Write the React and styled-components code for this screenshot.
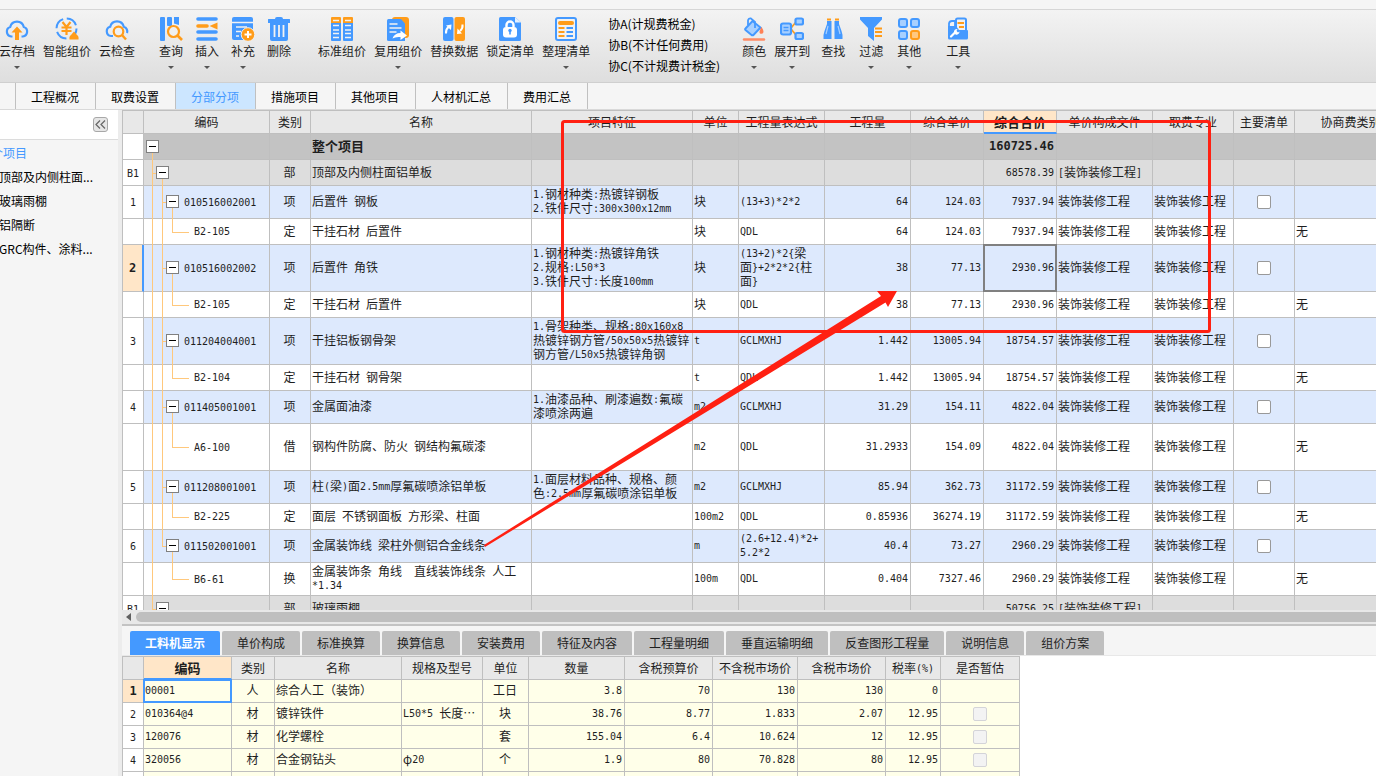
import React from 'react';
import styled, { createGlobalStyle, css } from 'styled-components';

const BLUE = '#4499ff';
const ORANGE = '#ff9c1a';
const PALE = '#a8d0ff';

const ICONS = {
  cloudUp: (
    <>
      <path
        d="M7.5 19.5H6.2A4.9 4.9 0 0 1 5.2 10 7 7 0 0 1 18.8 10a4.9 4.9 0 0 1-1 9.5h-1.3"
        fill="none"
        stroke={BLUE}
        strokeWidth="2.2"
      />
      <path d="M12 9.5l5.5 6H14V23h-4v-7.500H6.500z" fill={ORANGE} />
    </>
  ),
  smart: (
    <>
      <circle cx="11.500" cy="11.500" r="10" fill="none" stroke={BLUE} strokeWidth="2" strokeDasharray="12 3.700" />
      <path d="M7.500 5l4 5 4-5M6.500 10.500h10M6.500 14h10M11.500 10v8" fill="none" stroke={ORANGE} strokeWidth="2.200" />
      <path d="M19 14.500l3 3.500q2 1 1.500 4.500h-9q-.5-3.500 1.500-4.500z" fill={ORANGE} />
    </>
  ),
  cloudSearch: (
    <>
      <path
        d="M8 19H6A4.700 4.700 0 0 1 5.200 9.800 7 7 0 0 1 18.800 9.800 4.700 4.700 0 0 1 22 16"
        fill="none"
        stroke={BLUE}
        strokeWidth="2.200"
      />
      <circle cx="13.500" cy="14.500" r="4.800" fill="#f0f0f0" stroke={ORANGE} strokeWidth="2.200" />
      <path d="M17 18l4 4.500" stroke={ORANGE} strokeWidth="2.400" />
    </>
  ),
  query: (
    <>
      <rect x="1" y="0" width="5" height="24" rx="1" fill={BLUE} />
      <rect x="8" y="0" width="5" height="9" rx="1" fill={BLUE} />
      <path d="M15 0h5v8l-5-1.500z" fill={BLUE} />
      <circle cx="14.500" cy="14.500" r="5.500" fill="#f0f0f0" stroke={ORANGE} strokeWidth="2.200" />
      <path d="M18.500 18.500l4.500 4.500" stroke={ORANGE} strokeWidth="2.600" />
    </>
  ),
  insert: (
    <>
      <path d="M3 2h18M3 15h18M3 22h18" stroke={BLUE} strokeWidth="3.600" strokeLinecap="round" />
      <path d="M3 9h9" stroke={ORANGE} strokeWidth="3.600" strokeLinecap="round" />
      <path d="M14.500 9l8-3.500v7z" fill={ORANGE} />
    </>
  ),
  supplement: (
    <>
      <rect x="1" y="0" width="21" height="23" rx="2" fill={BLUE} />
      <path d="M1 5.500h21M5 10h11M5 14.500h5M5 19h3" stroke="#f2f2f2" strokeWidth="1.600" />
      <circle cx="17" cy="17.500" r="6.800" fill={ORANGE} stroke="#f0f0f0" strokeWidth="1" />
      <path d="M13.500 17.500h7M17 14v7" stroke="#fff" strokeWidth="2" />
    </>
  ),
  trash: (
    <>
      <path d="M8 2q0-2 2-2h4q2 0 2 2h6.500q.5 0 .5.500V6H1V2.500Q1 2 1.500 2z" fill={BLUE} />
      <path d="M3 6h18v16q0 2-2 2H5q-2 0-2-2z" fill={BLUE} />
      <path d="M7.500 8v12M12 8v12M16.500 8v12" stroke="#f2f2f2" strokeWidth="1.800" />
    </>
  ),
  standard: (
    <>
      <path d="M1 1q0-1 1-1h8q1 0 1 1v5H1zM13 1q0-1 1-1h8q1 0 1 1v5H13z" fill={ORANGE} />
      <path d="M1 6h10v17q0 1-1 1H2q-1 0-1-1zM13 6h10v17q0 1-1 1h-8q-1 0-1-1z" fill={BLUE} />
      <path
        d="M3 3.500h6M3 8.500h6M3 13h6M3 16.500h6M3 20.500h6M15 3.500h6M15 8.500h6M15 13h6M15 16.500h6M15 20.500h6"
        stroke="#f2f2f2"
        strokeWidth="1.500"
      />
    </>
  ),
  reuse: (
    <>
      <rect x="6" y="0" width="17" height="21" rx="3" fill={ORANGE} />
      <path d="M2.500 2H15l4 4.500V24H2.500Q1 24 1 22.500v-19Q1 2 2.500 2z" fill={BLUE} />
      <path d="M3.500 7h8M3.500 11h12M3.500 15h7" stroke="#f2f2f2" strokeWidth="1.600" />
      <path d="M6.500 21.500q2-5.500 8-5.500v-2.500l6.500 5-6.500 4.500v-3q-5-.5-8 1.500z" fill="#fff" />
    </>
  ),
  replace: (
    <>
      <rect x="1" y="0" width="10.500" height="24" rx="2" fill={BLUE} />
      <rect x="12.500" y="0" width="10.500" height="24" rx="2" fill={ORANGE} />
      <path d="M4 16.500q-.5-4 2.500-6.500M20.500 7.500q.5 4-2.500 6.500" fill="none" stroke="#fff" strokeWidth="2" />
      <path d="M4 8.500l5.500-1-.5 5.500zM20 16.500l-5 .5.500-5.500z" fill="#fff" />
    </>
  ),
  lock: (
    <>
      <path d="M2.500 0H17l6 5.500v17q0 1.500-1.500 1.500h-19Q1 24 1 22.500v-21Q1 0 2.500 0z" fill={BLUE} />
      <path d="M17 0l6 5.500h-6z" fill="#e6f1ff" />
      <rect x="5" y="10" width="14" height="10.500" rx="3" fill="#fff" />
      <path d="M8.500 10V8a3.500 3.500 0 0 1 7 0v2" fill="none" stroke="#fff" strokeWidth="2.400" />
      <circle cx="12" cy="13.500" r="1.700" fill={BLUE} />
      <path d="M12 14v3.500" stroke={BLUE} strokeWidth="1.600" />
    </>
  ),
  arrange: (
    <>
      <rect x="2" y="1" width="20" height="22" rx="2" fill="#f2f2f2" stroke={BLUE} strokeWidth="2" />
      <path d="M6 6h12" stroke={ORANGE} strokeWidth="4" strokeLinecap="round" />
      <path d="M4.500 11h6M4.500 15h6M4.500 19h6" stroke={ORANGE} strokeWidth="2" />
      <path d="M12.500 11h6.500M12.500 15h6.500M12.500 19h6.500" stroke={BLUE} strokeWidth="2" />
    </>
  ),
  color: (
    <>
      <path d="M3.500 11.500L10.500 4l8 6.500-7 7.500q-1 .5-2 0l-6-5q-.8-.7 0-1.500z" fill={PALE} stroke={BLUE} strokeWidth="2" />
      <path d="M6 8V3.500Q6.500 1 9 1.500l4 3.500v6" fill="none" stroke={BLUE} strokeWidth="1.800" />
      <path d="M19.500 11.500q2.500 4 0 4.500t0-4.500z" fill="#ff8055" stroke="#ff8055" strokeWidth="1.500" />
      <path d="M2 22.500h20" stroke="#ff8c66" strokeWidth="2.400" strokeLinecap="round" />
    </>
  ),
  expand: (
    <>
      <path d="M11 11l5-6M11 12l5 6" stroke={ORANGE} strokeWidth="1.800" />
      <rect x="1" y="6.500" width="10" height="11" rx="2" fill={PALE} stroke={BLUE} strokeWidth="2.200" />
      <path d="M3.500 10.500h5M3.500 13.500h5" stroke={BLUE} strokeWidth="1.500" />
      <rect x="15.500" y="1.500" width="7.500" height="6" rx="1.500" fill={PALE} stroke={BLUE} strokeWidth="2.200" />
      <rect x="15.500" y="16" width="7.500" height="6" rx="1.500" fill={PALE} stroke={BLUE} strokeWidth="2.200" />
    </>
  ),
  find: (
    <>
      <path d="M6 4h4.500v18h-8q-.5-4 1-8L6 7zM13.500 4H18v3l2.500 7q1.500 4 1 8h-8z" fill={BLUE} />
      <path d="M6 2.500h4M14 2.500h4" stroke={ORANGE} strokeWidth="2.200" />
      <path d="M7 9l-2 8M17 9l2 8" stroke={PALE} strokeWidth="1.200" />
    </>
  ),
  filter: (
    <>
      <path d="M1 0h22v2.500L15 11v13l-6-5v-8L1 2.500z" fill={BLUE} />
      <path d="M16 11.500h7M16 15h7M16 19h7" stroke={ORANGE} strokeWidth="1.900" />
    </>
  ),
  other: (
    <>
      <rect x="2" y="2" width="8" height="8" rx="2" fill={PALE} stroke={BLUE} strokeWidth="2" />
      <rect x="14" y="2" width="8" height="8" rx="2" fill={PALE} stroke={BLUE} strokeWidth="2" />
      <rect x="2" y="14" width="8" height="8" rx="2" fill={PALE} stroke={BLUE} strokeWidth="2" />
      <rect x="14" y="14" width="8" height="8" rx="2" fill="#ffc880" stroke={ORANGE} strokeWidth="2" />
    </>
  ),
  tools: (
    <>
      <path d="M10 13V3q0-1.500 1.500-1.500h7Q20 1.500 20 3v10" fill="#f2f2f2" stroke={BLUE} strokeWidth="2" />
      <path d="M11.500 6h6.500M13 10h5" stroke={ORANGE} strokeWidth="2" />
      <path d="M3 10V6.500Q3.500 4 6 4h3v6z" fill="#f2f2f2" stroke={BLUE} strokeWidth="1.800" />
      <path d="M2 9h8l3 4h8q1 0 1 1v7q0 1.500-1.500 1.500h-17Q2 22.500 2 21z" fill={BLUE} />
      <path d="M5 19.500l4.500-4.500" stroke="#fff" strokeWidth="2.200" strokeLinecap="round" />
      <path d="M8 15.500a3 3 0 0 1 3.500-3.500l-1 2 1.500 1.500 1.500-1a3 3 0 0 1-4 3z" fill="#fff" />
    </>
  ),
};

const TOOL_GROUPS = [
  {
    gap: 8,
    start: 0,
    items: [
      { icon: 'cloudUp', label: '云存档', menu: true },
      { icon: 'smart', label: '智能组价' },
      { icon: 'cloudSearch', label: '云检查' },
    ],
  },
  {
    gap: 12,
    start: 24,
    items: [
      { icon: 'query', label: '查询', menu: true },
      { icon: 'insert', label: '插入', menu: true },
      { icon: 'supplement', label: '补充', menu: true },
      { icon: 'trash', label: '删除' },
    ],
  },
  {
    gap: 8,
    start: 27,
    items: [
      { icon: 'standard', label: '标准组价' },
      { icon: 'reuse', label: '复用组价', menu: true },
      { icon: 'replace', label: '替换数据' },
      { icon: 'lock', label: '锁定清单' },
      { icon: 'arrange', label: '整理清单', menu: true },
    ],
  },
  { notes: ['协A(计规费税金)', '协B(不计任何费用)', '协C(不计规费计税金)'] },
  {
    gap: 8,
    start: 20,
    items: [
      { icon: 'color', label: '颜色', menu: true },
      { icon: 'expand', label: '展开到', menu: true },
    ],
  },
  {
    gap: 14,
    start: 11,
    items: [
      { icon: 'find', label: '查找' },
      { icon: 'filter', label: '过滤', menu: true },
      { icon: 'other', label: '其他', menu: true },
    ],
  },
  { gap: 8, start: 25, items: [{ icon: 'tools', label: '工具', menu: true }] },
];

const PAGES = ['工程概况', '取费设置', '分部分项', '措施项目', '其他项目', '人材机汇总', '费用汇总'];

const BILL_COLUMNS = [
  { width: 21, label: '' },
  { width: 126, label: '编码' },
  { width: 41, label: '类别' },
  { width: 221, label: '名称' },
  { width: 161, label: '项目特征' },
  { width: 46, label: '单位' },
  { width: 86, label: '工程量表达式' },
  { width: 86, label: '工程量' },
  { width: 73, label: '综合单价' },
  { width: 73, label: '综合合价', active: true },
  { width: 96, label: '单价构成文件' },
  { width: 81, label: '取费专业' },
  { width: 61, label: '主要清单' },
  { width: 112, label: '协商费类别' },
];

const WORK = '装饰装修工程';

const BILL_ROWS = [
  { level: 0, no: '', code: '', type: '', name: '整个项目', total: '160725.46' },
  { level: 1, no: 'B1', code: '', type: '部', name: '顶部及内侧柱面铝单板', total: '68578.39', file: `[${WORK}]` },
  { level: 2, no: '1', code: '010516002001', type: '项', name: '后置件 钢板', feature: '1.钢材种类:热镀锌钢板\n2.铁件尺寸:300x300x12mm', unit: '块', expr: '(13+3)*2*2', qty: '64', price: '124.03', total: '7937.94' },
  { level: 3, code: 'B2-105', type: '定', name: '干挂石材 后置件', unit: '块', expr: 'QDL', qty: '64', price: '124.03', total: '7937.94' },
  { level: 2, no: '2', active: true, code: '010516002002', type: '项', name: '后置件 角铁', feature: '1.钢材种类:热镀锌角铁\n2.规格:L50*3\n3.铁件尺寸:长度100mm', unit: '块', expr: '(13+2)*2{梁\n面}+2*2*2{柱\n面}', qty: '38', price: '77.13', total: '2930.96' },
  { level: 3, code: 'B2-105', type: '定', name: '干挂石材 后置件', unit: '块', expr: 'QDL', qty: '38', price: '77.13', total: '2930.96' },
  { level: 2, no: '3', code: '011204004001', type: '项', name: '干挂铝板钢骨架', feature: '1.骨架种类、规格:80x160x8\n热镀锌钢方管/50x50x5热镀锌\n钢方管/L50x5热镀锌角钢', unit: 't', expr: 'GCLMXHJ', qty: '1.442', price: '13005.94', total: '18754.57' },
  { level: 3, code: 'B2-104', type: '定', name: '干挂石材 钢骨架', unit: 't', expr: 'QDL', qty: '1.442', price: '13005.94', total: '18754.57' },
  { level: 2, no: '4', code: '011405001001', type: '项', name: '金属面油漆', feature: '1.油漆品种、刷漆遍数:氟碳\n漆喷涂两遍', unit: 'm2', expr: 'GCLMXHJ', qty: '31.29', price: '154.11', total: '4822.04' },
  { level: 3, tall: true, code: 'A6-100', type: '借', name: '钢构件防腐、防火 钢结构氟碳漆', unit: 'm2', expr: 'QDL', qty: '31.2933', price: '154.09', total: '4822.04' },
  { level: 2, no: '5', code: '011208001001', type: '项', name: '柱(梁)面2.5mm厚氟碳喷涂铝单板', feature: '1.面层材料品种、规格、颜\n色:2.5mm厚氟碳喷涂铝单板', unit: 'm2', expr: 'GCLMXHJ', qty: '85.94', price: '362.73', total: '31172.59' },
  { level: 3, code: 'B2-225', type: '定', name: '面层 不锈钢面板 方形梁、柱面', unit: '100m2', expr: 'QDL', qty: '0.85936', price: '36274.19', total: '31172.59' },
  { level: 2, no: '6', last: true, code: '011502001001', type: '项', name: '金属装饰线 梁柱外侧铝合金线条', unit: 'm', expr: '(2.6+12.4)*2+\n5.2*2', qty: '40.4', price: '73.27', total: '2960.29' },
  { level: 3, last: true, code: 'B6-61', type: '换', name: '金属装饰条 角线  直线装饰线条 人工\n*1.34', unit: '100m', expr: 'QDL', qty: '0.404', price: '7327.46', total: '2960.29' },
  { level: 1, no: 'B1', code: '', type: '部', name: '玻璃雨棚', total: '50756.25', file: `[${WORK}]` },
];

const DETAIL_TABS = [
  '工料机显示',
  '单价构成',
  '标准换算',
  '换算信息',
  '安装费用',
  '特征及内容',
  '工程量明细',
  '垂直运输明细',
  '反查图形工程量',
  '说明信息',
  '组价方案',
];

const DETAIL_COLUMNS = [
  { width: 21, label: '' },
  { width: 88, label: '编码', active: true },
  { width: 43, label: '类别' },
  { width: 127, label: '名称' },
  { width: 81, label: '规格及型号' },
  { width: 46, label: '单位' },
  { width: 96, label: '数量' },
  { width: 88, label: '含税预算价' },
  { width: 85, label: '不含税市场价' },
  { width: 88, label: '含税市场价' },
  { width: 55, label: '税率(%)' },
  { width: 79, label: '是否暂估' },
];

const DETAIL_ROWS = [
  ['1', '00001', '人', '综合人工（装饰）', '', '工日', '3.8', '70', '130', '130', '0'],
  ['2', '010364@4', '材', '镀锌铁件', 'L50*5 长度…', '块', '38.76', '8.77', '1.833', '2.07', '12.95'],
  ['3', '120076', '材', '化学螺栓', '', '套', '155.04', '6.4', '10.624', '12', '12.95'],
  ['4', '320056', '材', '合金钢钻头', 'φ20', '个', '1.9', '80', '70.828', '80', '12.95'],
  ['', '', '', '', '', '', '', '', '', '', ''],
];

// Latin characters take half the width of a Chinese one in the grids
const CellText = ({ children = '' }) =>
  children.split(/([\x20-\x7e]+)/).map((part, i) => (i % 2 ? <Half key={i}>{part}</Half> : part));

const Toolbar = () => (
  <StyledToolbar>
    {TOOL_GROUPS.map((group, i) =>
      group.notes ? (
        <Notes key={i}>
          {group.notes.map((note) => (
            <li key={note}>{note}</li>
          ))}
        </Notes>
      ) : (
        <ToolGroup key={i} $gap={group.gap} $start={group.start}>
          {group.items.map(({ icon, label, menu }) => (
            <ToolButton key={label} type="button">
              <svg width="24" height="24" viewBox="0 0 24 24" aria-hidden="true">
                {ICONS[icon]}
              </svg>
              <span>{label}</span>
              {menu && <Caret />}
            </ToolButton>
          ))}
        </ToolGroup>
      )
    )}
  </StyledToolbar>
);

const Sidebar = () => (
  <StyledSidebar>
    <SidebarHead>
      <CollapseButton type="button" aria-label="收起">
        <svg width="11" height="9" viewBox="0 0 11 9" aria-hidden="true">
          <path d="M5 0.500L1 4.500l4 4M10 0.500L6 4.500l4 4" fill="none" stroke="#666" strokeWidth="1.200" />
        </svg>
      </CollapseButton>
    </SidebarHead>
    <Outline>
      <OutlineItem $root>整个项目</OutlineItem>
      <OutlineItem>顶部及内侧柱面...</OutlineItem>
      <OutlineItem>玻璃雨棚</OutlineItem>
      <OutlineItem>铝隔断</OutlineItem>
      <OutlineItem>GRC构件、涂料...</OutlineItem>
    </Outline>
  </StyledSidebar>
);

const GridHead = ({ columns }) => (
  <>
    <colgroup>
      {columns.map((col, i) => (
        <Col key={i} $width={col.width} />
      ))}
    </colgroup>
    <thead>
      <tr>
        {columns.map((col, i) => (
          <HeadCell key={i} $active={col.active}>
            <CellText>{col.label}</CellText>
          </HeadCell>
        ))}
      </tr>
    </thead>
  </>
);

const TreeCell = ({ row }) => {
  const { level, last, code } = row;
  return (
    <StyledTreeCell>
      <Guide $depth={0} $from={level === 0 ? 'middle' : 'top'} />
      {level === 1 && <Guide $depth={1} $from="middle" />}
      {level > 1 && !(last && level === 3) && <Guide $depth={1} $to={last ? 'middle' : 'bottom'} />}
      {level === 2 && <Guide $depth={2} $from="middle" />}
      {level === 3 && <Guide $depth={2} $to="middle" />}
      {level > 0 && <Branch $level={level} />}
      <TreeLabel $level={level}>
        {level < 3 && <Toggle type="button" aria-label="折叠" />}
        <span>
          <CellText>{code}</CellText>
        </span>
      </TreeLabel>
    </StyledTreeCell>
  );
};

const BillRow = ({ row }) => {
  const work = row.level > 1 ? WORK : '';
  return (
    <StyledBillRow $level={row.level} $tall={row.tall}>
      <NumberCell $active={row.active}>
        <CellText>{row.no}</CellText>
      </NumberCell>
      <TreeCell row={row} />
      <Cell $align="center">{row.type}</Cell>
      <Cell>
        <CellText>{row.name}</CellText>
      </Cell>
      <Cell>
        <CellText>{row.feature}</CellText>
      </Cell>
      <Cell>
        <CellText>{row.unit}</CellText>
      </Cell>
      <Cell>
        <CellText>{row.expr}</CellText>
      </Cell>
      <Cell $align="right">
        <CellText>{row.qty}</CellText>
      </Cell>
      <Cell $align="right">
        <CellText>{row.price}</CellText>
      </Cell>
      <Cell $align="right" $frame={row.active && '#808080'}>
        <CellText>{row.total}</CellText>
      </Cell>
      <Cell>
        <CellText>{row.file || work}</CellText>
      </Cell>
      <Cell>{work}</Cell>
      <CheckCell>{row.level === 2 && <Checkbox type="checkbox" aria-label={`主要清单 ${row.no}`} />}</CheckCell>
      <Cell>{row.level === 3 && '无'}</Cell>
    </StyledBillRow>
  );
};

const DetailRow = ({ cells, active }) => {
  const [no, code, type, name, spec, unit, ...numbers] = cells;
  return (
    <StyledDetailRow>
      <NumberCell $active={active} $plain>
        <CellText>{no}</CellText>
      </NumberCell>
      <Cell $frame={active && BLUE}>
        <CellText>{code}</CellText>
      </Cell>
      <Cell $align="center">{type}</Cell>
      <Cell>{name}</Cell>
      <Cell>
        <CellText>{spec}</CellText>
      </Cell>
      <Cell $align="center">{unit}</Cell>
      {numbers.map((value, i) => (
        <Cell key={i} $align="right">
          <CellText>{value}</CellText>
        </Cell>
      ))}
      <CheckCell>{no > 1 && <Checkbox type="checkbox" disabled aria-label={`是否暂估 ${no}`} />}</CheckCell>
    </StyledDetailRow>
  );
};

const Annotation = () => (
  <StyledAnnotation width="1376" height="776" aria-hidden="true">
    <rect x="562.500" y="121.500" width="647" height="210" rx="2" fill="none" stroke="#ff2012" strokeWidth="3" />
    <path d="M484 545L881 296l-4-5 20 0-9 16-2.500-4.500L485 547z" fill="#ff2012" />
  </StyledAnnotation>
);

const App = () => (
  <Page>
    <GlobalStyle />
    <TitleStrip />
    <Toolbar />
    <PageTabs>
      <TabStub />
      {PAGES.map((page) => (
        <PageTab key={page} type="button" $active={page === '分部分项'}>
          {page}
        </PageTab>
      ))}
    </PageTabs>
    <Workspace>
      <Sidebar />
      <Panels>
        <BillPane>
          <Table>
            <GridHead columns={BILL_COLUMNS} />
            <tbody>
              {BILL_ROWS.map((row, i) => (
                <BillRow key={i} row={row} />
              ))}
            </tbody>
          </Table>
        </BillPane>
        <ScrollTrack>
          <ScrollArrow />
          <ScrollThumb />
        </ScrollTrack>
        <DetailTabs>
          {DETAIL_TABS.map((tab, i) => (
            <DetailTab key={tab} type="button" $active={i === 0}>
              {tab}
            </DetailTab>
          ))}
        </DetailTabs>
        <DetailPane>
          <Table>
            <GridHead columns={DETAIL_COLUMNS} />
            <tbody>
              {DETAIL_ROWS.map((cells, i) => (
                <DetailRow key={i} cells={cells} active={i === 0} />
              ))}
            </tbody>
          </Table>
        </DetailPane>
      </Panels>
    </Workspace>
    <Annotation />
  </Page>
);

export default App;

const GlobalStyle = createGlobalStyle`
  * {
    box-sizing: border-box;
  }

  body {
    margin: 0;
    overflow: hidden;
    background: #f5f5f5;
    color: #1e1e1e;
    font-family: 'Noto Sans CJK SC', sans-serif;
    font-size: 12px;
    line-height: 18px;
  }

  button {
    padding: 0;
    border: 0;
    background: none;
    color: inherit;
    font: inherit;
    white-space: nowrap;
  }

  ul {
    margin: 0;
    padding: 0;
    list-style: none;
  }
`;

const Page = styled.div`
  position: relative;
  display: flex;
  flex-direction: column;
  height: 100vh;
  overflow: hidden;
`;

const TitleStrip = styled.header`
  flex: none;
  height: 10px;
  border-bottom: 1px solid #d6d6d6;
`;

const StyledToolbar = styled.div`
  display: flex;
  flex: none;
  align-items: flex-start;
  height: 73px;
  margin-left: -1px;
  padding-top: 7px;
  border-bottom: 1px solid #cfcfcf;
  background: linear-gradient(#f3f3f3, #dedede);
`;

const ToolGroup = styled.div`
  display: flex;
  flex: none;
  gap: ${({ $gap }) => $gap}px;
  margin-left: ${({ $start }) => $start}px;
`;

const ToolButton = styled.button`
  display: flex;
  flex-direction: column;
  align-items: center;

  span {
    margin-top: 1px;
  }
`;

const Caret = styled.i`
  margin-top: 6px;
  border: 3px solid transparent;
  border-top-color: #555;
  border-bottom: 0;
`;

const Notes = styled.ul`
  flex: none;
  width: 114px;
  margin: -4px 0 0 18px;
  color: #000;
  line-height: 21px;
  white-space: nowrap;
`;

const PageTabs = styled.nav`
  display: flex;
  flex: none;
  height: 27px;
  border-bottom: 1px solid #d9d9d9;
`;

const TabStub = styled.div`
  width: 16px;
  border-right: 1px solid #c0c0c0;
`;

const PageTab = styled.button`
  padding: 2px 16px 0 15px;
  border-right: 1px solid #c0c0c0;
  color: #000;

  ${({ $active }) =>
    $active &&
    css`
      background: #cce6ff;
      color: ${BLUE};
    `}
`;

const Workspace = styled.main`
  display: flex;
  flex: 1;
  min-height: 0;
`;

const StyledSidebar = styled.aside`
  flex: none;
  width: 122px;
  border-right: 4px solid #ececec;
  overflow: hidden;
`;

const SidebarHead = styled.div`
  display: flex;
  justify-content: flex-end;
  height: 30px;
  padding: 7px 10px 0 0;
  border-bottom: 1px solid #dcdcdc;
  background: #fff;
`;

const CollapseButton = styled.button`
  display: flex;
  align-items: center;
  justify-content: center;
  width: 15px;
  height: 15px;
  border: 1px solid #a8a8a8;
  border-radius: 3px;
  background: #e6e6e6;
`;

const Outline = styled.ul`
  margin: 1px 0 0 -21px;
  color: #000;
  line-height: 24px;
  white-space: nowrap;
`;

const OutlineItem = styled.li`
  padding-left: 20px;

  ${({ $root }) =>
    $root &&
    css`
      padding-left: 0;
      color: ${BLUE};
    `}
`;

const Panels = styled.section`
  display: flex;
  flex: 1;
  flex-direction: column;
  min-width: 0;
`;

const BillPane = styled.div`
  flex: 1;
  min-height: 0;
  overflow: hidden;
  border-left: 1px solid #bfbfbf;
`;

const Table = styled.table`
  table-layout: fixed;
  width: 0;
  border-collapse: separate;
  border-spacing: 0;
  border-top: 1px solid #bfbfbf;
  line-height: 14px;
`;

const Col = styled.col`
  width: ${({ $width }) => $width}px;
`;

const Half = styled.span`
  font-family: 'DejaVu Sans Mono', monospace;
  font-size: 10px;
  line-height: 10px;
  vertical-align: 1px;
`;

const strong = css`
  font-size: 13px;
  font-weight: 700;

  ${Half} {
    font-size: 12px;
  }
`;

const gridLine = css`
  border: 0 solid #bfbfbf;
  border-width: 0 1px 1px 0;
`;

const HeadCell = styled.th`
  ${gridLine}
  height: 23px;
  padding: 0;
  background: #e8e8e8;
  font-weight: 400;
  white-space: nowrap;

  ${({ $active }) =>
    $active &&
    css`
      ${strong}
      border-bottom: 2px solid ${BLUE};
      background: #ffe6c8;
    `}
`;

const Cell = styled.td`
  ${gridLine}
  position: relative;
  padding: 1px 2px 3px 1px;
  text-align: ${({ $align = 'left' }) => $align};
  white-space: pre;

  ${({ $frame }) =>
    $frame &&
    css`
      &::after {
        content: '';
        position: absolute;
        inset: -1px;
        z-index: 1;
        border: 2px solid ${$frame};
      }
    `}
`;

const CheckCell = styled.td`
  ${gridLine}
  padding: 0;
`;

const NumberCell = styled.th`
  ${gridLine}
  padding: 2px 0;
  background: #fff;
  font-weight: 400;

  ${({ $active, $plain }) =>
    $active &&
    css`
      ${strong}
      border-right: ${$plain ? '1px' : '2px'} solid ${BLUE};
      background: #ffe6c8;
    `}
`;

const ROW_COLORS = ['#c3c3c3', '#dddddd', '#dde9fd', '#ffffff'];

const StyledBillRow = styled.tr`
  height: ${({ $tall }) => ($tall ? 47 : 26)}px;

  td {
    background: ${({ $level }) => ROW_COLORS[$level]};
    ${({ $level }) => $level === 0 && strong}
  }
`;

const StyledDetailRow = styled.tr`
  height: 23px;

  td {
    background: #ffffe9;
  }
`;

const StyledTreeCell = styled.td`
  ${gridLine}
  position: relative;
  padding: 0 0 1px;
`;

const TreeLabel = styled.div`
  display: flex;
  align-items: center;
  gap: 5px;
  padding-left: ${({ $level }) => [2, 12, 22, 50][$level]}px;
`;

const Toggle = styled.button`
  position: relative;
  display: flex;
  align-items: center;
  justify-content: center;
  width: 13px;
  height: 13px;
  border: 1px solid #808080;
  background: #fff;

  &::before {
    content: '';
    width: 7px;
    height: 1px;
    background: #000;
  }
`;

// vertical tree line, one per depth
const Guide = styled.i`
  position: absolute;
  top: ${({ $from = 'top' }) => ($from === 'middle' ? '50%' : '0')};
  bottom: ${({ $to = 'bottom' }) => ($to === 'middle' ? '50%' : '-1px')};
  left: ${({ $depth }) => $depth * 10 + 8}px;
  width: 1px;
  background: #ffc87c;
`;

const Branch = styled.i`
  position: absolute;
  top: 50%;
  left: ${({ $level }) => $level * 10 - 2}px;
  width: ${({ $level }) => ($level === 3 ? 17 : 5)}px;
  height: 1px;
  background: #ffc87c;
`;

const Checkbox = styled.input`
  appearance: none;
  display: block;
  width: 14px;
  height: 14px;
  margin: 0 auto;
  border: 1px solid #999;
  border-radius: 2px;
  background: #fff;

  &:disabled {
    border-color: #d4d4d8;
    background: #f3f3f3;
  }
`;

const ScrollTrack = styled.div`
  display: flex;
  flex: none;
  align-items: center;
  height: 16px;
  padding-left: 4px;
  border-bottom: 2px solid #c3c3c3;
  background: #e8e8e8;
`;

const ScrollArrow = styled.i`
  margin-right: 5px;
  border: 4px solid transparent;
  border-right: 5px solid #606060;
  border-left: 0;
`;

const ScrollThumb = styled.div`
  flex: 1;
  height: 10px;
  border-radius: 5px 0 0 5px;
  background: #bfbfbf;
`;

const DetailTabs = styled.nav`
  display: flex;
  flex: none;
  gap: 2px;
  padding: 5px 0 0 8px;
  border-bottom: 1px solid #e8e8e8;
`;

const DetailTab = styled.button`
  height: 24px;
  padding: 0 15px;
  border-radius: 2px 2px 0 0;
  background: #bfbfbf;

  ${({ $active }) =>
    $active &&
    css`
      background: ${BLUE};
      color: #fff;
      font-weight: 700;
    `}
`;

const DetailPane = styled.div`
  flex: none;
  height: 120px;
  overflow: hidden;
  border-left: 1px solid #bfbfbf;
  background: #fff;
`;

const StyledAnnotation = styled.svg`
  position: absolute;
  top: 0;
  left: 0;
  z-index: 2;
  pointer-events: none;
`;
